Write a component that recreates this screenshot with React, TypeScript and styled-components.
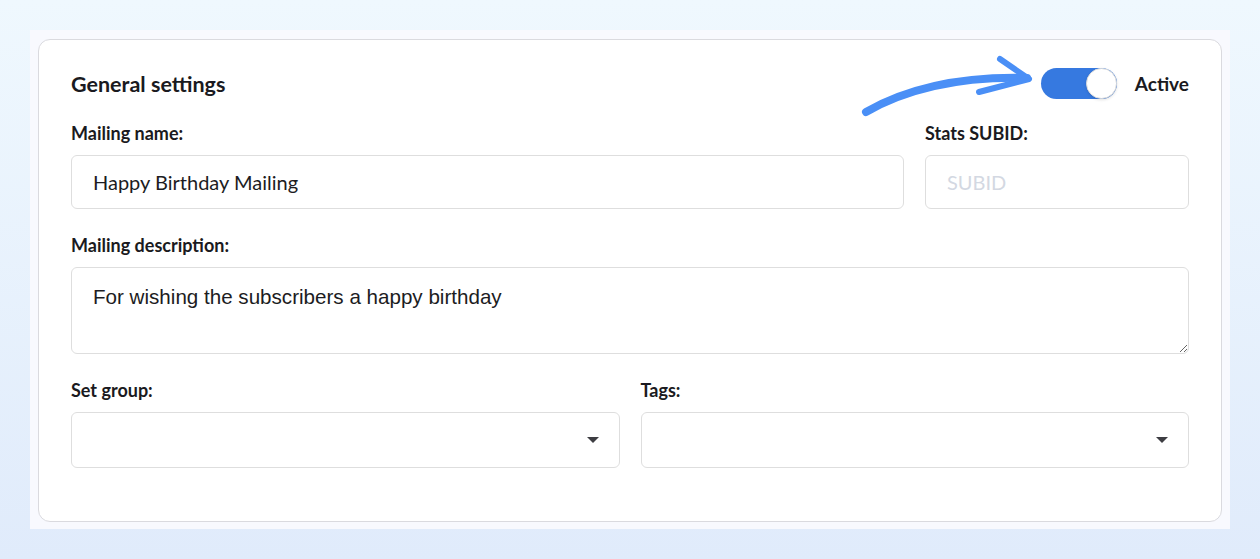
import styled, { createGlobalStyle } from 'styled-components';

const GlobalStyle = createGlobalStyle`
  html, body {
    margin: 0;
    padding: 0;
  }

  body {
    height: 559px;
    background: linear-gradient(180deg, #eff8fe 0%, #e0ebfb 100%);
    font-family: Lato, 'Noto Sans', sans-serif;
    color: #1c1c22;
  }
`;

export default function App() {
  return (
    <>
      <GlobalStyle />
      <Page>
        <Panel>
          <Card>
            <Header>
              <Title>General settings</Title>
              <StatusGroup>
                <Arrow viewBox="0 0 175 64" width="175" height="64">
                  <path
                    d="M5 58 C 40 38, 90 22, 166 24"
                    fill="none"
                    stroke="#4a8ff6"
                    strokeWidth="8"
                    strokeLinecap="round"
                  />
                  <path
                    d="M139 5 L168 25 L118 38"
                    fill="none"
                    stroke="#4a8ff6"
                    strokeWidth="6"
                    strokeLinecap="round"
                    strokeLinejoin="round"
                  />
                </Arrow>
                <Toggle $on>
                  <Knob />
                </Toggle>
                <StatusText>Active</StatusText>
              </StatusGroup>
            </Header>

            <Row $columns="1fr 264px">
              <Field>
                <Label>Mailing name:</Label>
                <Input defaultValue="Happy Birthday Mailing" />
              </Field>
              <Field>
                <Label>Stats SUBID:</Label>
                <Input placeholder="SUBID" />
              </Field>
            </Row>

            <Field>
              <Label>Mailing description:</Label>
              <TextArea defaultValue="For wishing the subscribers a happy birthday" />
            </Field>

            <Row $columns="1fr 1fr">
              <Field>
                <Label>Set group:</Label>
                <SelectBox>
                  <Caret />
                </SelectBox>
              </Field>
              <Field>
                <Label>Tags:</Label>
                <SelectBox>
                  <Caret />
                </SelectBox>
              </Field>
            </Row>
          </Card>
        </Panel>
      </Page>
    </>
  );
}

function Caret() {
  return (
    <svg width="14" height="8" viewBox="0 0 14 8">
      <path d="M1 1 H13 L7 7 Z" fill="#3d3d42" />
    </svg>
  );
}

const Page = styled.div`
  padding: 30px;
  box-sizing: border-box;
  height: 559px;
`;

const Panel = styled.div`
  display: flex;
  flex-direction: column;

  height: 499px;
  padding: 9px 8px 8px 8px;

  background-color: #f8f9fe;
  box-sizing: border-box;
`;

const Card = styled.div`
  display: flex;
  flex-direction: column;
  row-gap: 26px;

  padding: 28px 32px 53px 32px;

  background-color: #fff;
  border: 1px solid #dadadf;
  border-radius: 12px;
  box-sizing: border-box;
`;

const Header = styled.div`
  display: flex;
  align-items: center;
  justify-content: space-between;

  height: 31px;
  margin-bottom: -2px;
`;

const Title = styled.h2`
  margin: 0;

  font-size: 21.5px;
  font-weight: 700;
  color: #1a1a20;
`;

const StatusGroup = styled.div`
  display: flex;
  align-items: center;
  column-gap: 18px;

  position: relative;
`;

const Arrow = styled.svg`
  position: absolute;
  left: -180px;
  top: -14px;
`;

const Toggle = styled.div<{ $on?: boolean }>`
  display: flex;
  justify-content: ${(p) => (p.$on ? 'flex-end' : 'flex-start')};

  width: 76px;
  height: 31px;

  background-color: ${(p) => (p.$on ? '#3679e0' : '#d5d8de')};
  border-radius: 16px;
`;

const Knob = styled.div`
  width: 31px;
  height: 31px;

  background-color: #fff;
  border: 1px solid #dcdcdc;
  border-radius: 50%;
  box-shadow: 0 1px 3px rgba(0, 0, 0, 0.12);
  box-sizing: border-box;
`;

const StatusText = styled.span`
  font-size: 19px;
  font-weight: 700;
  color: #1a1a20;
`;

const Row = styled.div<{ $columns: string }>`
  display: grid;
  grid-template-columns: ${(p) => p.$columns};
  column-gap: 21px;
`;

const Field = styled.div`
  display: flex;
  flex-direction: column;
  row-gap: 11px;
  min-width: 0;
`;

const Label = styled.label`
  font-size: 18px;
  line-height: 21px;
  font-weight: 700;
  color: #1a1a20;
`;

const Input = styled.input`
  width: 100%;
  height: 54px;
  padding: 0 21px;

  font-family: Lato, 'Noto Sans', sans-serif;
  font-size: 20px;
  color: #1c1c22;

  background-color: #fff;
  border: 1px solid #dedede;
  border-radius: 6px;
  box-sizing: border-box;
  outline: 0;

  &::placeholder {
    color: #d3d8e2;
  }
`;

const TextArea = styled.textarea`
  display: block;
  width: 100%;
  height: 87px;
  padding: 17px 21px;

  font-family: 'Liberation Sans', Arial, sans-serif;
  font-size: 20.6px;
  line-height: 24px;
  color: #1c1c22;

  background-color: #fff;
  border: 1px solid #dedede;
  border-radius: 6px;
  box-sizing: border-box;
  outline: 0;
  resize: vertical;
`;

const SelectBox = styled.div`
  display: flex;
  align-items: center;
  justify-content: flex-end;

  height: 56px;
  padding-right: 19px;

  background-color: #fff;
  border: 1px solid #dedede;
  border-radius: 6px;
  box-sizing: border-box;
  cursor: pointer;
`;
